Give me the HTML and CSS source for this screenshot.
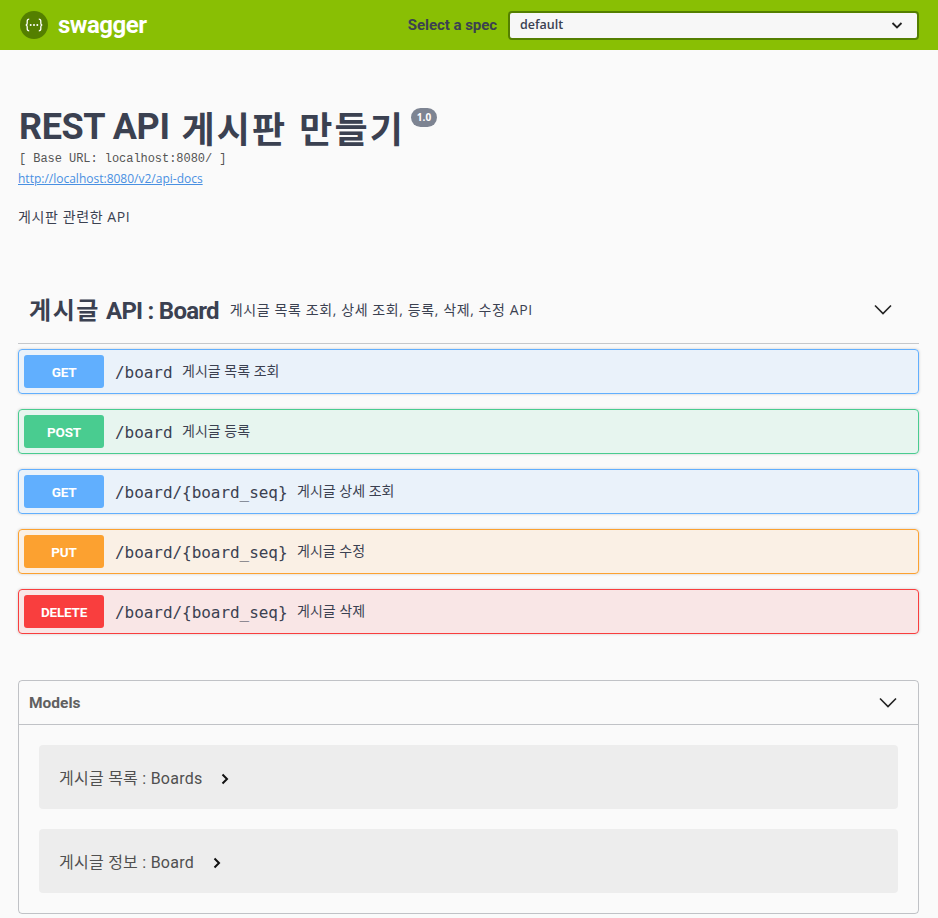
FILE: index.html
```html
<!DOCTYPE html>
<html lang="ko">
<head>
<meta charset="utf-8">
<title>Swagger UI</title>
<link rel="stylesheet" href="styles.css">
</head>
<body>
<header class="topbar">
  <a class="logo">
    <svg class="logo-icon" viewBox="0 0 28 28" width="28" height="28">
      <circle cx="14" cy="14" r="14" fill="#547f00"/>
      <path d="M9.200 8.200c-1.600 0-2 .8-2 2v2c0 1-.5 1.700-1.400 1.800.9.1 1.400.8 1.400 1.800v2c0 1.200.4 2 2 2M18.800 8.200c1.600 0 2 .8 2 2v2c0 1 .5 1.700 1.400 1.800-.9.1-1.400.8-1.400 1.800v2c0 1.200-.4 2-2 2" fill="none" stroke="#fff" stroke-width="1.300"/>
      <circle cx="10.700" cy="14" r="1" fill="#fff"/><circle cx="14" cy="14" r="1" fill="#fff"/><circle cx="17.300" cy="14" r="1" fill="#fff"/>
    </svg>
    <span class="logo-text">swagger</span>
  </a>
  <div class="spec">
    <span class="spec-label">Select a spec</span>
    <div class="spec-select">
      <span>default</span>
      <svg class="spec-arrow" viewBox="0 0 20 20" width="20" height="20"><path d="M5.500 8l4.500 4.500L14.500 8" fill="none" stroke="#222" stroke-width="1.800"/></svg>
    </div>
  </div>
</header>

<main class="wrapper">
  <section class="info">
    <h1 class="title"><span class="title-en">REST API</span><span class="title-ko">게시판 만들기</span><span class="version">1.0</span></h1>
    <p class="base-url">[ Base URL: localhost:8080/ ]</p>
    <a class="docs-link">http://localhost:8080/v2/api-docs</a>
    <p class="description">게시판 관련한 API</p>
  </section>

  <section class="tag">
    <div class="tag-head">
      <h2 class="tag-name"><span class="tag-ko">게시글</span> <span class="tag-en">API : Board</span></h2>
      <span class="tag-desc">게시글 목록 조회, 상세 조회, 등록, 삭제, 수정 API</span>
      <svg class="chev" viewBox="0 0 20 20" width="20" height="20"><path d="M2 5.500l8 8 8-8" fill="none" stroke="#222" stroke-width="1.600"/></svg>
    </div>
    <div class="op get"><span class="method">GET</span><span class="path">/board</span><span class="summary">게시글 목록 조회</span></div>
    <div class="op post"><span class="method">POST</span><span class="path">/board</span><span class="summary">게시글 등록</span></div>
    <div class="op get"><span class="method">GET</span><span class="path">/board/{board_seq}</span><span class="summary">게시글 상세 조회</span></div>
    <div class="op put"><span class="method">PUT</span><span class="path">/board/{board_seq}</span><span class="summary">게시글 수정</span></div>
    <div class="op delete"><span class="method">DELETE</span><span class="path">/board/{board_seq}</span><span class="summary">게시글 삭제</span></div>
  </section>

  <section class="models">
    <div class="models-head">
      <h4 class="models-title">Models</h4>
      <svg class="chev" viewBox="0 0 20 20" width="20" height="20"><path d="M2 5.500l8 8 8-8" fill="none" stroke="#222" stroke-width="1.600"/></svg>
    </div>
    <div class="models-body">
      <div class="model"><span>게시글 목록 : Boards</span><svg class="model-arrow" viewBox="0 0 10 12" width="10" height="12"><path d="M2.500 1.500L7 6l-4.500 4.500" fill="none" stroke="#111" stroke-width="2"/></svg></div>
      <div class="model"><span>게시글 정보 : Board</span><svg class="model-arrow" viewBox="0 0 10 12" width="10" height="12"><path d="M2.500 1.500L7 6l-4.500 4.500" fill="none" stroke="#111" stroke-width="2"/></svg></div>
    </div>
  </section>
</main>
</body>
</html>
```

FILE: styles.css
```css
* { box-sizing: border-box; }
html, body { margin: 0; padding: 0; }
body {
  background: #fafafa;
  color: #3b4151;
  font-family: "Open Sans", "Noto Sans CJK KR", sans-serif;
  overflow: hidden;
}
.topbar {
  height: 50px;
  background: #89bf04;
  display: flex;
  align-items: center;
  padding: 0 20px;
  justify-content: space-between;
}
.logo { display: flex; align-items: center; gap: 10px; }
.logo-icon { display: block; }
.logo-text {
  color: #fff;
  font: 700 24px/28px Roboto, sans-serif;
  letter-spacing: -.5px;
}
.spec { display: flex; align-items: center; }
.spec-label {
  font: 700 15px/20px Roboto, sans-serif;
  letter-spacing: -.05px;
  margin-right: 11px;
}
.spec-select {
  width: 411px;
  height: 29px;
  border: 2px solid #547f00;
  border-radius: 4px;
  background: #f7f7f7;
  display: flex;
  align-items: center;
  justify-content: space-between;
  padding: 0 12px 0 10px;
  font: 600 12.5px/20px "Open Sans", sans-serif;
  margin-right: -1px;
}
.spec-arrow { display: block; margin-right: -2px; }

.wrapper { padding: 0 19px 0 18px; }

.info { padding-top: 50px; margin-bottom: 50px; }
.title {
  margin: 0 0 0 1px;
  font: 700 36px/50px Roboto, "Noto Sans CJK KR", sans-serif;
  display: flex;
  align-items: flex-start;
  padding-top: 2px;
}
.title-en { letter-spacing: -.4px; }
.title-ko {
  margin-left: 12px;
  font-family: "Noto Sans CJK KR", sans-serif;
  font-weight: 700;
  letter-spacing: 2.100px;
}
.version {
  margin: 6px 0 0 6px;
  width: 26px;
  height: 19px;
  border-radius: 57px;
  background: #7d8492;
  color: #fff;
  font: 700 10px/19px "Open Sans", sans-serif;
  letter-spacing: 0;
  text-align: center;
}
.base-url {
  margin: 0 0 0 1px;
  font: 400 12px/14px "Liberation Mono", monospace;
  letter-spacing: -.05px;
  color: #555;
}
.docs-link {
  display: block;
  margin-top: 5px;
  font: 400 12px/16px "Open Sans", sans-serif;
  color: #4990e2;
  text-decoration: underline;
}
.description {
  margin: 20px 0 0;
  font: 400 14px/20px "Open Sans", "Noto Sans CJK KR", sans-serif;
  letter-spacing: .6px;
}

.tag-head {
  height: 67px;
  border-bottom: 1px solid #c6c8cb;
  display: flex;
  align-items: center;
  padding: 0 26px 0 11px;
  margin-bottom: 5px;
}
.tag-name {
  margin: 0;
  font: 700 24px/30px Roboto, "Noto Sans CJK KR", sans-serif;
}
.tag-ko {
  font-family: "Noto Sans CJK KR", sans-serif;
  letter-spacing: 1.600px;
}
.tag-en { letter-spacing: -.75px; }
.tag-desc {
  margin-left: 11px;
  font: 400 14px/20px "Open Sans", "Noto Sans CJK KR", sans-serif;
  letter-spacing: .6px;
  flex: 1;
}
.op {
  height: 45px;
  border: 1px solid;
  border-radius: 4px;
  margin-bottom: 15px;
  padding: 5px;
  display: flex;
  align-items: center;
  box-shadow: 0 0 3px rgba(0,0,0,.19);
}
.op:last-child { margin-bottom: 0; }
.method {
  width: 80px;
  height: 33px;
  border-radius: 3px;
  color: #fff;
  font: 700 13.500px/35px Roboto, sans-serif;
  letter-spacing: -.2px;
  text-align: center;
}
.path {
  margin-left: 11px;
  padding-right: 9.500px;
  padding-top: 2px;
  font: 400 16px/20px "DejaVu Sans Mono", monospace;
  letter-spacing: -.05px;
}
.summary {
  padding-bottom: 1px;
  font: 400 14px/20px "Open Sans", "Noto Sans CJK KR", sans-serif;
}
.get { background: rgba(97,175,254,.1); border-color: #61affe; }
.get .method { background: #61affe; }
.post { background: rgba(73,204,144,.1); border-color: #49cc90; }
.post .method { background: #49cc90; }
.put { background: rgba(252,161,48,.1); border-color: #fca130; }
.put .method { background: #fca130; }
.delete { background: rgba(249,62,62,.1); border-color: #f93e3e; }
.delete .method { background: #f93e3e; }

.models {
  margin-top: 46px;
  border: 1px solid rgba(59,65,81,.3);
  border-radius: 4px;
}
.models-head {
  height: 44px;
  border-bottom: 1px solid rgba(59,65,81,.3);
  display: flex;
  align-items: center;
  justify-content: space-between;
  padding: 0 20px 0 10px;
}
.models-title {
  margin: 0;
  font: 700 15.500px/20px Roboto, sans-serif;
  color: #606060;
}
.models-body {
  padding: 20px;
  display: flex;
  flex-direction: column;
  gap: 20px;
}
.model {
  height: 64px;
  background: rgba(0,0,0,.05);
  border-radius: 4px;
  padding: 4px 20px 0;
  display: flex;
  align-items: center;
  gap: 18px;
  font: 400 16px/20px Roboto, "Noto Sans CJK KR", sans-serif;
  letter-spacing: .25px;
  color: #505050;
}
.model-arrow { display: block; flex: none; }
```
